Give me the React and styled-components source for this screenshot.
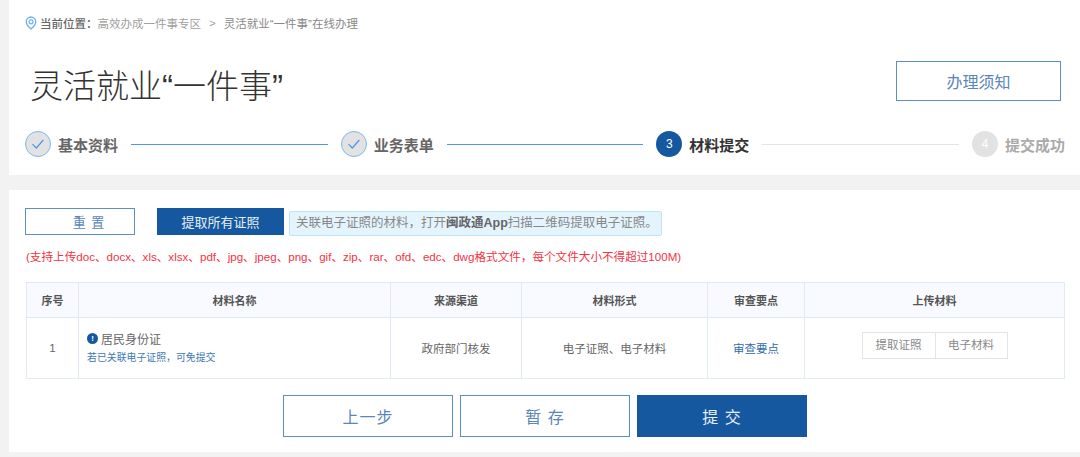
import styled, { createGlobalStyle } from "styled-components";

const GlobalStyle = createGlobalStyle`
  html, body {
    margin: 0;
    padding: 0;
    background: #f2f2f2;
  }
  body {
    font-family: "Liberation Sans", "Noto Sans CJK SC", sans-serif;
    color: #333;
  }
  * {
    box-sizing: border-box;
  }
`;

const steps = [
  { label: "基本资料", state: "done" },
  { label: "业务表单", state: "done" },
  { label: "材料提交", state: "active", num: 3 },
  { label: "提交成功", state: "todo", num: 4 },
];

const columns = [52, 312, 131, 186, 97, 260];
const heads = ["序号", "材料名称", "来源渠道", "材料形式", "审查要点", "上传材料"];

export default function App() {
  return (
    <Page>
      <GlobalStyle />
      <TopPanel>
        <Crumbs>
          <svg width="12" height="14" viewBox="0 0 12 14" fill="none">
            <path d="M6 1a4.8 4.8 0 0 0-4.8 4.8C1.2 9 6 13 6 13s4.8-4 4.8-7.2A4.8 4.8 0 0 0 6 1z" stroke="#6db3ee" strokeWidth="1.3" />
            <circle cx="6" cy="5.8" r="2" stroke="#6db3ee" strokeWidth="1.2" />
          </svg>
          <CrumbLabel>当前位置：</CrumbLabel>
          <span>高效办成一件事专区</span>
          <CrumbSep>&gt;</CrumbSep>
          <CrumbLast>灵活就业“一件事”在线办理</CrumbLast>
        </Crumbs>
        <TitleRow>
          <Title>灵活就业“一件事”</Title>
          <NoticeButton>办理须知</NoticeButton>
        </TitleRow>
        <Steps>
          {steps.map((step, i) => (
            <Step key={step.label}>
              {i > 0 && <StepLine $done={step.state !== "todo"} />}
              <StepCircle $state={step.state}>
                {step.state === "done" ? (
                  <svg width="14" height="12" viewBox="0 0 14 12" fill="none">
                    <path d="M1.5 6.2 5.3 10l7-8" stroke="#4a98e6" strokeWidth="1.2" />
                  </svg>
                ) : (
                  step.num
                )}
              </StepCircle>
              <StepLabel $state={step.state}>{step.label}</StepLabel>
            </Step>
          ))}
        </Steps>
      </TopPanel>

      <MainPanel>
        <Toolbar>
          <ResetButton $w={110} $h={27} $size={13} $spaced>重 置</ResetButton>
          <SolidButton $w={127} $h={27} $size={13}>提取所有证照</SolidButton>
          <Hint>关联电子证照的材料，打开<b>闽政通App</b>扫描二维码提取电子证照。</Hint>
        </Toolbar>
        <Warning>(支持上传doc、docx、xls、xlsx、pdf、jpg、jpeg、png、gif、zip、rar、ofd、edc、dwg格式文件，每个文件大小不得超过100M)</Warning>
        <Table>
          <colgroup>
            {columns.map((w, i) => (
              <col key={i} style={{ width: w }} />
            ))}
          </colgroup>
          <thead>
            <tr>
              {heads.map((h) => (
                <Th key={h}>{h}</Th>
              ))}
            </tr>
          </thead>
          <tbody>
            <tr>
              <Td>1</Td>
              <NameCell>
                <NameLine>
                  <InfoDot>!</InfoDot>
                  居民身份证
                </NameLine>
                <NameNote>若已关联电子证照，可免提交</NameNote>
              </NameCell>
              <Td>政府部门核发</Td>
              <Td>电子证照、电子材料</Td>
              <Td><ReviewLink>审查要点</ReviewLink></Td>
              <UploadCell>
                <UploadGroup>
                  <UploadButton>提取证照</UploadButton>
                  <UploadButton>电子材料</UploadButton>
                </UploadGroup>
              </UploadCell>
            </tr>
          </tbody>
        </Table>
        <Actions>
          <OutlineButton $w={170} $h={42} $size={16} $spaced>上一步</OutlineButton>
          <OutlineButton $w={170} $h={42} $size={16} $spaced>暂 存</OutlineButton>
          <SolidButton $w={170} $h={42} $size={16} $spaced>提 交</SolidButton>
        </Actions>
      </MainPanel>
    </Page>
  );
}

const Page = styled.div`
  width: 1080px;
  height: 457px;
  padding-left: 9px;
  overflow: hidden;
`;

const TopPanel = styled.section`
  height: 175px;
  padding: 14px 15px 0 16px;
  background: #fff;
`;

const Crumbs = styled.div`
  display: flex;
  align-items: center;
  height: 18px;
  font-size: 11.5px;
  color: #a0a0a0;

  svg {
    margin-right: 3px;
  }
`;

const CrumbLabel = styled.span`
  color: #666;
  font-weight: 500;
`;

const CrumbSep = styled.span`
  margin: 0 8px;
`;

const CrumbLast = styled.span`
  color: #888;
`;

const TitleRow = styled.div`
  display: flex;
  justify-content: space-between;
  align-items: flex-start;
  height: 41px;
  margin-top: 29px;
  padding-left: 5px;
`;

const Title = styled.h1`
  margin: 2px 0 0 0;
  font-size: 33px;
  line-height: 48px;
  font-weight: 300;
  color: #333;
  white-space: nowrap;
`;

const NoticeButton = styled.button`
  width: 165px;
  height: 40px;
  margin-right: 4px;
  background: #fff;
  border: 1px solid #5b8fc7;
  color: #5a86b8;
  font-family: inherit;
  font-size: 16px;
`;

const Steps = styled.div`
  display: flex;
  align-items: center;
  margin-top: 29px;
`;

const Step = styled.div`
  display: flex;
  align-items: center;
  flex: 1;

  &:first-child {
    flex: 0 0 auto;
  }
`;

const StepLine = styled.div`
  flex: 1;
  height: 1px;
  margin: 0 13px;
  background: ${(p) => (p.$done ? "#4a98e6" : "#e4e4e4")};
`;

const StepCircle = styled.div`
  display: flex;
  align-items: center;
  justify-content: center;
  flex: 0 0 26px;
  width: 26px;
  height: 26px;
  border-radius: 50%;
  font-size: 12px;
  color: #fff;
  background: ${(p) => (p.$state === "active" ? "#15589f" : "#e2e2e2")};
  border: ${(p) => (p.$state === "done" ? "1px solid #7ab8f2" : "none")};
`;

const StepLabel = styled.span`
  margin-left: 7px;
  font-size: 15px;
  font-weight: 700;
  white-space: nowrap;
  color: ${(p) => (p.$state === "active" ? "#333" : p.$state === "done" ? "#666" : "#aaa")};
`;

const MainPanel = styled.section`
  height: 262px;
  margin-top: 15px;
  padding: 18px 16px 0 16px;
  background: #fff;
`;

const Toolbar = styled.div`
  display: flex;
  align-items: center;
  height: 27px;
`;

const OutlineButton = styled.button`
  width: ${(p) => p.$w}px;
  height: ${(p) => p.$h}px;
  padding: 0;
  background: #fff;
  border: 1px solid #5b8fc7;
  color: #5a86b8;
  font-family: inherit;
  font-size: ${(p) => p.$size}px;
  letter-spacing: ${(p) => (p.$spaced ? "1px" : "0")};
`;

const ResetButton = styled(OutlineButton)`
  margin-right: 22px;
  padding-left: 18px;
`;

const SolidButton = styled(OutlineButton)`
  background: #15589f;
  border-color: #15589f;
  color: #e8eef5;
`;

const Hint = styled.div`
  width: 373px;
  height: 25px;
  margin: 4px 0 0 5px;
  padding-left: 6px;
  line-height: 23px;
  font-size: 12.5px;
  color: #888;
  white-space: nowrap;
  background: #e4f4fd;
  border: 1px solid #bfe3f8;
  border-radius: 2px;

  b {
    color: #666;
  }
`;

const Warning = styled.p`
  margin: 13px 0 0 1px;
  height: 17px;
  line-height: 17px;
  font-size: 11.6px;
  color: #f5333f;
  white-space: nowrap;
`;

const Table = styled.table`
  width: 1038px;
  margin: 17px 0 0 1px;
  border-collapse: collapse;
  table-layout: fixed;
`;

const Th = styled.th`
  height: 35px;
  padding: 0;
  background: #f8faff;
  border: 1px solid #dfeaf5;
  font-size: 11px;
  font-weight: 700;
  color: #555;
`;

const Td = styled.td`
  height: 61px;
  padding: 0 0 1px 0;
  border: 1px solid #dfeaf5;
  font-size: 11.5px;
  text-align: center;
  color: #666;
`;

const NameCell = styled(Td)`
  padding: 0 0 3px 8px;
  text-align: left;
`;

const NameLine = styled.div`
  display: flex;
  align-items: center;
  gap: 3px;
  font-size: 12px;
  color: #666;
`;

const InfoDot = styled.span`
  display: flex;
  align-items: center;
  justify-content: center;
  width: 11px;
  height: 11px;
  border-radius: 50%;
  background: #15589f;
  color: #fff;
  font-size: 8px;
  font-weight: 700;
`;

const NameNote = styled.div`
  margin-top: 3px;
  font-size: 9.9px;
  color: #3f79b5;
`;

const ReviewLink = styled.span`
  color: #2f6da8;
`;

const UploadCell = styled(Td)`
  padding-bottom: 5px;
`;

const UploadGroup = styled.div`
  display: inline-flex;
  border: 1px solid #e4e4e4;
`;

const UploadButton = styled.span`
  width: 72px;
  height: 25px;
  line-height: 24px;
  font-size: 11.5px;
  color: #888;

  & + & {
    border-left: 1px solid #e4e4e4;
  }
`;

const Actions = styled.div`
  display: flex;
  justify-content: center;
  gap: 7px;
  width: 1038px;
  margin: 16px 0 0 1px;
`;
